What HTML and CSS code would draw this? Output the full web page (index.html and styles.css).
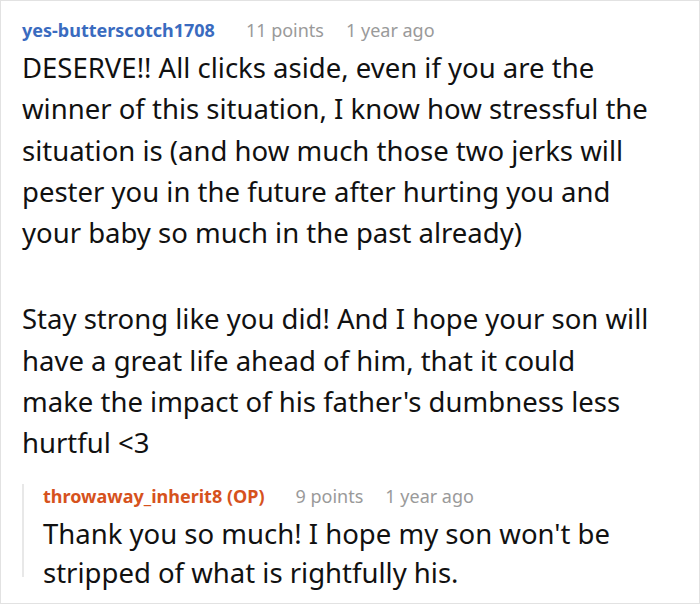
FILE: index.html
```html
<!DOCTYPE html>
<html>
<head>
<meta charset="utf-8">
<link rel="stylesheet" href="styles.css">
</head>
<body>
<div class="frame">
  <div class="comment">
    <div class="meta">
      <span class="user">yes-butterscotch1708</span>
      <span class="points">11 points</span>
      <span class="time">1 year ago</span>
    </div>
    <div class="text">
      <p>DESERVE!! All clicks aside, even if you are the winner of this situation, I know how stressful the situation is (and how much those two jerks will pester you in the future after hurting you and your baby so much in the past already)</p>
      <p>Stay strong like you did! And I hope your son will have a great life ahead of him, that it could make the impact of his father's dumbness less hurtful &lt;3</p>
    </div>
    <div class="reply">
      <div class="meta reply-meta">
        <span class="user op">throwaway_inherit8 (OP)</span>
        <span class="points">9 points</span>
        <span class="time">1 year ago</span>
      </div>
      <div class="text reply-text">
        <p>Thank you so much! I hope my son won't be stripped of what is rightfully his.</p>
      </div>
    </div>
  </div>
</div>
</body>
</html>
```
FILE: styles.css
```css
html, body {
  margin: 0;
  padding: 0;
  background: #fff;
}
.frame {
  box-sizing: border-box;
  width: 700px;
  height: 604px;
  border: 1px solid #e2e2e2;
  overflow: hidden;
  font-family: "Noto Sans", "Open Sans", sans-serif;
  color: #111;
}
.comment {
  padding: 17px 0 0 21px;
}
.meta {
  display: flex;
  align-items: baseline;
  font-size: 18px;
  line-height: 24px;
  white-space: nowrap;
}
.user {
  font-weight: 700;
  color: #3a6bbf;
  margin-right: 31px;
}
.user.op {
  color: #d6521d;
}
.points {
  color: #9a9a9a;
  margin-right: 22px;
}
.time {
  color: #9a9a9a;
}
.text {
  margin-top: 5px;
  width: 628px;
  font-size: 27.5px;
  line-height: 41.25px;
}
.text p {
  margin: 0;
}
.text p + p {
  margin-top: 45px;
}
.reply {
  margin-top: 28px;
  height: 93px;
  border-left: 2px solid #e8e8e8;
  padding-left: 19px;
}
.reply-meta {
  margin-top: -7px;
}
.reply-text {
  width: 620px;
  line-height: 39px;
  margin-top: 6px;
}
```
